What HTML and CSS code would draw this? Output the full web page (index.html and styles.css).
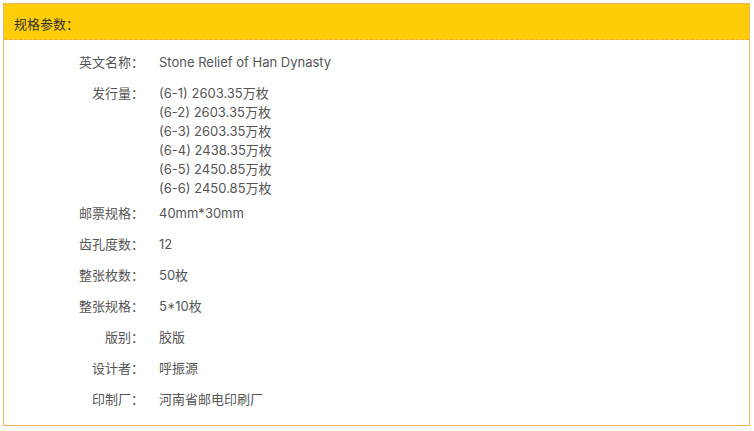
FILE: index.html
```html
<!DOCTYPE html>
<html lang="zh-CN">
<head>
<meta charset="utf-8">
<title>规格参数</title>
<link rel="stylesheet" href="styles.css">
</head>
<body>
<div class="panel">
  <div class="panel-head">规格参数：</div>
  <div class="panel-body">
    <div class="row"><div class="label">英文名称：</div><div class="value">Stone Relief of Han Dynasty</div></div>
    <div class="row row-multi"><div class="label">发行量：</div><div class="value">
      <div>(6-1) 2603.35万枚</div>
      <div>(6-2) 2603.35万枚</div>
      <div>(6-3) 2603.35万枚</div>
      <div>(6-4) 2438.35万枚</div>
      <div>(6-5) 2450.85万枚</div>
      <div>(6-6) 2450.85万枚</div>
    </div></div>
    <div class="row"><div class="label">邮票规格：</div><div class="value">40mm*30mm</div></div>
    <div class="row"><div class="label">齿孔度数：</div><div class="value">12</div></div>
    <div class="row"><div class="label">整张枚数：</div><div class="value">50枚</div></div>
    <div class="row"><div class="label">整张规格：</div><div class="value">5*10枚</div></div>
    <div class="row"><div class="label">版别：</div><div class="value">胶版</div></div>
    <div class="row"><div class="label">设计者：</div><div class="value">呼振源</div></div>
    <div class="row"><div class="label">印制厂：</div><div class="value">河南省邮电印刷厂</div></div>
  </div>
</div>
</body>
</html>
```
FILE: styles.css
```css
html, body {
  margin: 0;
  padding: 0;
  background: #fff;
}
body {
  padding: 3px;
  font-family: "Inter", "Noto Sans CJK SC", sans-serif;
  font-size: 13px;
}
.panel {
  width: 745px;
  height: 421px;
  border: 1px solid #edb462;
}
.panel-head {
  box-sizing: border-box;
  height: 36px;
  background: #ffcd08;
  border-bottom: 1px dashed #eda94e;
  padding: 7px 0 0 10px;
  line-height: 26px;
  color: #333;
}
.panel-body {
  padding-top: 13px;
}
.row {
  display: flex;
  gap: 15px;
  line-height: 19px;
  margin-bottom: 12px;
  color: #555;
}
.row-multi {
  margin-bottom: 6px;
}
.label {
  width: 140px;
  text-align: right;
  flex: none;
}
```
